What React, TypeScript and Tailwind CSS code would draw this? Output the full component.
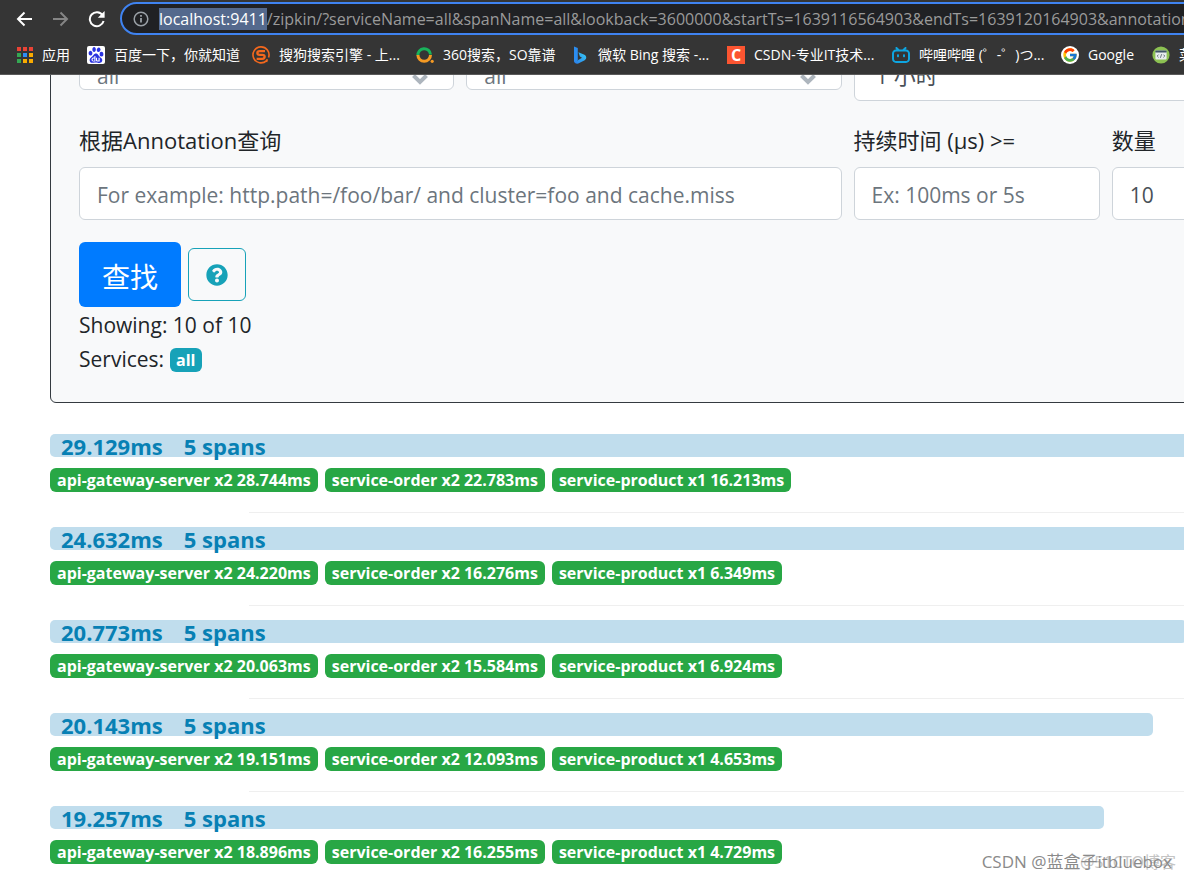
import { ReactNode, useState } from "react";
import { FaQuestionCircle } from "react-icons/fa";
import { FcGoogle } from "react-icons/fc";
import { SiBaidu, SiBilibili } from "react-icons/si";

type Bookmark = {
  label: string;
  width: string;
  icon: ReactNode;
};

type Trace = {
  duration: number;
  spans: number;
  services: { name: string; count: number; duration: string }[];
};

const AppsIcon = () => {
  const colors = [
    "#ea4335", "#ea4335", "#ea4335",
    "#34a853", "#2f8df5", "#f9ab00",
    "#34a853", "#f9ab00", "#f9ab00",
  ];

  return (
    <svg viewBox="0 0 16 16" className="size-4">
      {colors.map((c, i) => (
        <rect
          key={i}
          x={(i % 3) * 6}
          y={Math.floor(i / 3) * 6}
          width="4"
          height="4"
          fill={c}
        />
      ))}
    </svg>
  );
};

const SogouIcon = () => (
  <svg viewBox="0 0 18 18" className="size-[18px]" fill="none" stroke="#f4681d">
    <path d="M14.6 14.6A8 8 0 1 1 16.6 11.4" strokeWidth="1.6" />
    <path
      d="M13 5.2H7.6c-3 0-3 3.7 0 3.7h2.8c3 0 3 3.9 0 3.9H4.6"
      strokeWidth="2.3"
    />
    <path d="M15.2 13.2l-.8 2.8" strokeWidth="1.8" />
  </svg>
);

const So360Icon = () => (
  <svg viewBox="0 0 18 18" className="size-[18px]" fill="none">
    <path d="M1.9 9.5a6.3 6.3 0 1 1 12.6-1" stroke="#19b35b" strokeWidth="3" />
    <path d="M1.9 9a6.3 6.3 0 0 0 12.6 0" stroke="#f59a23" strokeWidth="3" />
    <circle cx="16.2" cy="15.3" r="1.6" fill="#f59a23" />
  </svg>
);

const BingIcon = () => (
  <svg viewBox="0 0 18 18" className="size-[18px]">
    <defs>
      <linearGradient id="bing" x1="0" y1="1" x2="1" y2="0">
        <stop offset="0" stopColor="#2a7bea" />
        <stop offset="1" stopColor="#38cdf5" />
      </linearGradient>
    </defs>
    <path d="M3 .4l3.8 1.5v12L4.6 17Q3 16.4 3 14.6z" fill="#2b8df0" />
    <path
      d="M3 14.4Q4.6 16 6.8 14.2L11 11.7 8.9 10.5 7.4 6.2l6 2.5c2.3 1.2 2.5 4 .3 5.5l-6.4 3.4Q3.6 18.4 3 14.4z"
      fill="url(#bing)"
    />
  </svg>
);

const CodeIcon = () => (
  <svg viewBox="0 0 18 18" className="size-[18px]">
    <circle cx="9" cy="9" r="8.6" fill="#8cc152" />
    <rect x="3.4" y="4.4" width="11.2" height="9.2" rx="1" fill="#e8ecef" />
    <path d="M3.4 6.6V5.2q0-.8.8-.8h9.6q.8 0 .8.8v1.4z" fill="#3f5467" />
    <path
      d="M6.6 8.6L5.2 10l1.4 1.4M11.4 8.6l1.4 1.4-1.4 1.4M9.6 8.2l-1.2 3.6"
      fill="none"
      stroke="#4b5b66"
      strokeWidth=".8"
    />
  </svg>
);

const bookmarks: Bookmark[] = [
  { label: "应用", width: "w-[70px]", icon: <AppsIcon /> },
  {
    label: "百度一下，你就知道",
    width: "w-[165px]",
    icon: (
      <span className="flex size-[18px] items-center justify-center rounded-xs bg-white">
        <SiBaidu size={16} className="text-[#2932e1]" />
      </span>
    ),
  },
  { label: "搜狗搜索引擎 - 上...", width: "w-[164px]", icon: <SogouIcon /> },
  { label: "360搜索，SO靠谱", width: "w-[155px]", icon: <So360Icon /> },
  { label: "微软 Bing 搜索 -...", width: "w-[156px]", icon: <BingIcon /> },
  {
    label: "CSDN-专业IT技术...",
    width: "w-[165px]",
    icon: (
      <span className="flex size-[18px] items-center justify-center bg-[#fc5531] text-base font-bold text-white">
        C
      </span>
    ),
  },
  {
    label: "哔哩哔哩 (゜-゜)つ...",
    width: "w-[169px]",
    icon: <SiBilibili size={18} className="text-[#0ea5e0]" />,
  },
  {
    label: "Google",
    width: "w-[91px]",
    icon: (
      <span className="flex size-[18px] items-center justify-center rounded-full bg-white">
        <FcGoogle size={16} />
      </span>
    ),
  },
  { label: "菜鸟教程", width: "w-[120px]", icon: <CodeIcon /> },
];

const makeTrace = (
  duration: number,
  gateway: string,
  order: string,
  product: string,
): Trace => ({
  duration,
  spans: 5,
  services: [
    { name: "api-gateway-server", count: 2, duration: gateway },
    { name: "service-order", count: 2, duration: order },
    { name: "service-product", count: 1, duration: product },
  ],
});

const traces: Trace[] = [
  makeTrace(29.129, "28.744ms", "22.783ms", "16.213ms"),
  makeTrace(24.632, "24.220ms", "16.276ms", "6.349ms"),
  makeTrace(20.773, "20.063ms", "15.584ms", "6.924ms"),
  makeTrace(20.143, "19.151ms", "12.093ms", "4.653ms"),
  makeTrace(19.257, "18.896ms", "16.255ms", "4.729ms"),
];

const longest = Math.max(...traces.map((t) => t.duration));

const BrowserBar = () => (
  <header className="relative z-10 shrink-0 overflow-hidden border-b border-[#5a5a5a] bg-[#353535] text-white">
    <div className="flex h-[37px] items-center pl-4">
      <div className="flex w-[104px] shrink-0 items-center gap-[18px]">
        <button aria-label="Back">
          <svg viewBox="0 0 18 18" className="size-[18px]" fill="none" stroke="#fff" strokeWidth="2">
            <path d="M16 9H2.5M8.5 2.5L2 9l6.5 6.5" />
          </svg>
        </button>
        <button aria-label="Forward">
          <svg viewBox="0 0 18 18" className="size-[18px]" fill="none" stroke="#858585" strokeWidth="2">
            <path d="M1 9h13.5M8.5 2.5L15 9l-6.5 6.5" />
          </svg>
        </button>
        <button aria-label="Reload">
          <svg viewBox="0 0 18 18" className="size-[18px]" fill="none">
            <path d="M14.6 5.2A7 7 0 1 0 15.6 11" stroke="#fff" strokeWidth="2" />
            <path d="M16.6 1v6.8H9.8z" fill="#fff" />
          </svg>
        </button>
      </div>
      <div className="-mr-10 flex h-[33px] flex-1 items-center rounded-full border-2 border-[#3f83f1] bg-[#202124] pl-[11px]">
        <svg viewBox="0 0 16 16" className="mr-[10px] size-4 shrink-0" fill="none" stroke="#9aa0a6" strokeWidth="1.5">
          <circle cx="8" cy="8" r="6.8" />
          <path d="M8 7v4.5M8 4v1.7" strokeWidth="1.8" />
        </svg>
        <div
          role="textbox"
          aria-label="Address"
          className="whitespace-nowrap text-base leading-[22px] text-[#9a9a9a]"
        >
          <span className="inline-block bg-[#54698d] text-white">localhost:9411</span>
          /zipkin/?serviceName=all&amp;spanName=all&amp;lookback=3600000&amp;startTs=1639116564903&amp;endTs=1639120164903&amp;annotationQuery=
        </div>
      </div>
    </div>
    <nav className="flex h-[37px] pb-0.5 pl-[17px]">
      {bookmarks.map((b) => (
        <a
          key={b.label}
          href="#"
          className={`flex shrink-0 items-center gap-[9px] whitespace-nowrap text-sm ${b.width}`}
        >
          <span className="shrink-0">{b.icon}</span>
          <span>{b.label}</span>
        </a>
      ))}
    </nav>
  </header>
);

const PickSelect = ({ label }: { label: string }) => (
  <div className="relative col-span-3">
    <select
      aria-label={label}
      className="h-[34px] w-full appearance-none rounded-md border border-[#ced4da] bg-white px-[17px] pt-1 text-[#6c757d]"
    >
      <option>all</option>
    </select>
    <svg
      viewBox="0 0 16 16"
      className="pointer-events-none absolute right-[26px] bottom-1.5 size-4"
      fill="none"
      stroke="#adb5bd"
      strokeWidth="4"
    >
      <path d="M1.5 4.5L8 11l6.5-6.5" />
    </svg>
  </div>
);

const fieldClass =
  "h-[53px] w-full rounded-md border border-[#ced4da] bg-white pt-0.5 text-[#495057] placeholder:text-[#6c757d]";

const labelClass = "block pb-3 text-[22px] leading-[30px]";

const SearchPanel = () => {
  const [query, setQuery] = useState("");
  const [minDuration, setMinDuration] = useState("");
  const [limit, setLimit] = useState("10");

  return (
    <form
      onSubmit={(e) => e.preventDefault()}
      className="-mt-7 rounded-md border border-[#343a40] bg-[#f8f9fa] px-7 pb-[26px] text-[21px]"
    >
      <div className="grid grid-cols-12 gap-x-3">
        <div className="col-span-6 grid grid-cols-6 items-start gap-x-3 pt-2">
          <PickSelect label="服务名" />
          <PickSelect label="Span名称" />
        </div>
        <select
          aria-label="时间"
          className={`${fieldClass} col-span-6 appearance-none px-[21px] text-[22px]`}
        >
          <option>1 小时</option>
        </select>

        <div className="col-span-6 pt-6">
          <label htmlFor="query" className={labelClass}>
            根据Annotation查询
          </label>
          <input
            id="query"
            className={`${fieldClass} px-[17px]`}
            placeholder="For example: http.path=/foo/bar/ and cluster=foo and cache.miss"
            value={query}
            onChange={(e) => setQuery(e.target.value)}
          />
        </div>
        <div className="col-span-2 pt-6">
          <label htmlFor="duration" className={labelClass}>
            持续时间 (μs) &gt;=
          </label>
          <input
            id="duration"
            className={`${fieldClass} px-[17px]`}
            placeholder="Ex: 100ms or 5s"
            value={minDuration}
            onChange={(e) => setMinDuration(e.target.value)}
          />
        </div>
        <div className="col-span-2 pt-6">
          <label htmlFor="limit" className={labelClass}>
            数量
          </label>
          <input
            id="limit"
            className={`${fieldClass} px-[17px]`}
            value={limit}
            onChange={(e) => setLimit(e.target.value)}
          />
        </div>
      </div>

      <div className="mt-[22px] flex items-center gap-[7px]">
        <button
          type="submit"
          className="h-[65px] w-[102px] rounded-md bg-[#007bff] pt-1 text-[28px] text-white"
        >
          查找
        </button>
        <button
          type="button"
          aria-label="Help"
          className="flex h-[53px] w-[58px] items-center justify-center rounded-md border border-[#17a2b8] text-[#17a2b8]"
        >
          <FaQuestionCircle size={22} />
        </button>
      </div>

      <div className="mt-px leading-[34px]">Showing: 10 of 10</div>
      <div className="flex items-center gap-1.5 leading-[34px]">
        Services:
        <span className="mt-0.5 rounded-md bg-[#17a2b8] px-1.5 text-base leading-6 font-bold text-white">
          all
        </span>
      </div>
    </form>
  );
};

const TraceRow = ({ trace, last }: { trace: Trace; last: boolean }) => (
  <li>
    <a href="#" className="block">
      <div
        className="h-[23px] rounded-[5px] bg-[#c0dded]"
        style={{ width: `${(trace.duration / longest) * 100}%` }}
      >
        <div className="flex gap-[21px] pl-[11px] leading-6 font-bold text-[#0780b4]">
          <span>{trace.duration.toFixed(3)}ms</span>
          <span>{trace.spans} spans</span>
        </div>
      </div>
      <div className="mt-[11px] flex gap-[7px]">
        {trace.services.map((s) => (
          <span
            key={s.name}
            className="rounded-md bg-[#28a745] px-[7px] text-base leading-6 font-bold whitespace-nowrap text-white"
          >
            {s.name} x{s.count} {s.duration}
          </span>
        ))}
      </div>
    </a>
    {!last && <hr className="mt-5 mb-[14px] ml-[199px] border-[#efefef]" />}
  </li>
);

export default function App() {
  return (
    <div className="relative flex h-screen flex-col overflow-hidden bg-white font-['Open_Sans','Noto_Sans_CJK_SC',sans-serif]">
      <BrowserBar />

      <main className="min-h-0 flex-1 overflow-hidden pl-[50px] text-[22px] text-[#212529]">
        {/* wider than the window, the page is scrolled to its left edge */}
        <div className="w-[1595px]">
          <SearchPanel />
          <ul className="mt-[31px]">
            {traces.map((t, i) => (
              <TraceRow key={t.duration} trace={t} last={i === traces.length - 1} />
            ))}
          </ul>
        </div>
      </main>

      <div className="pointer-events-none absolute right-2 bottom-1 text-base text-[#c4c4c4]">
        @51CTO博客
      </div>
      <div className="pointer-events-none absolute right-3 bottom-1 text-[17px] text-[#8a8a8a]">
        CSDN @蓝盒子itbluebox
      </div>
    </div>
  );
}
